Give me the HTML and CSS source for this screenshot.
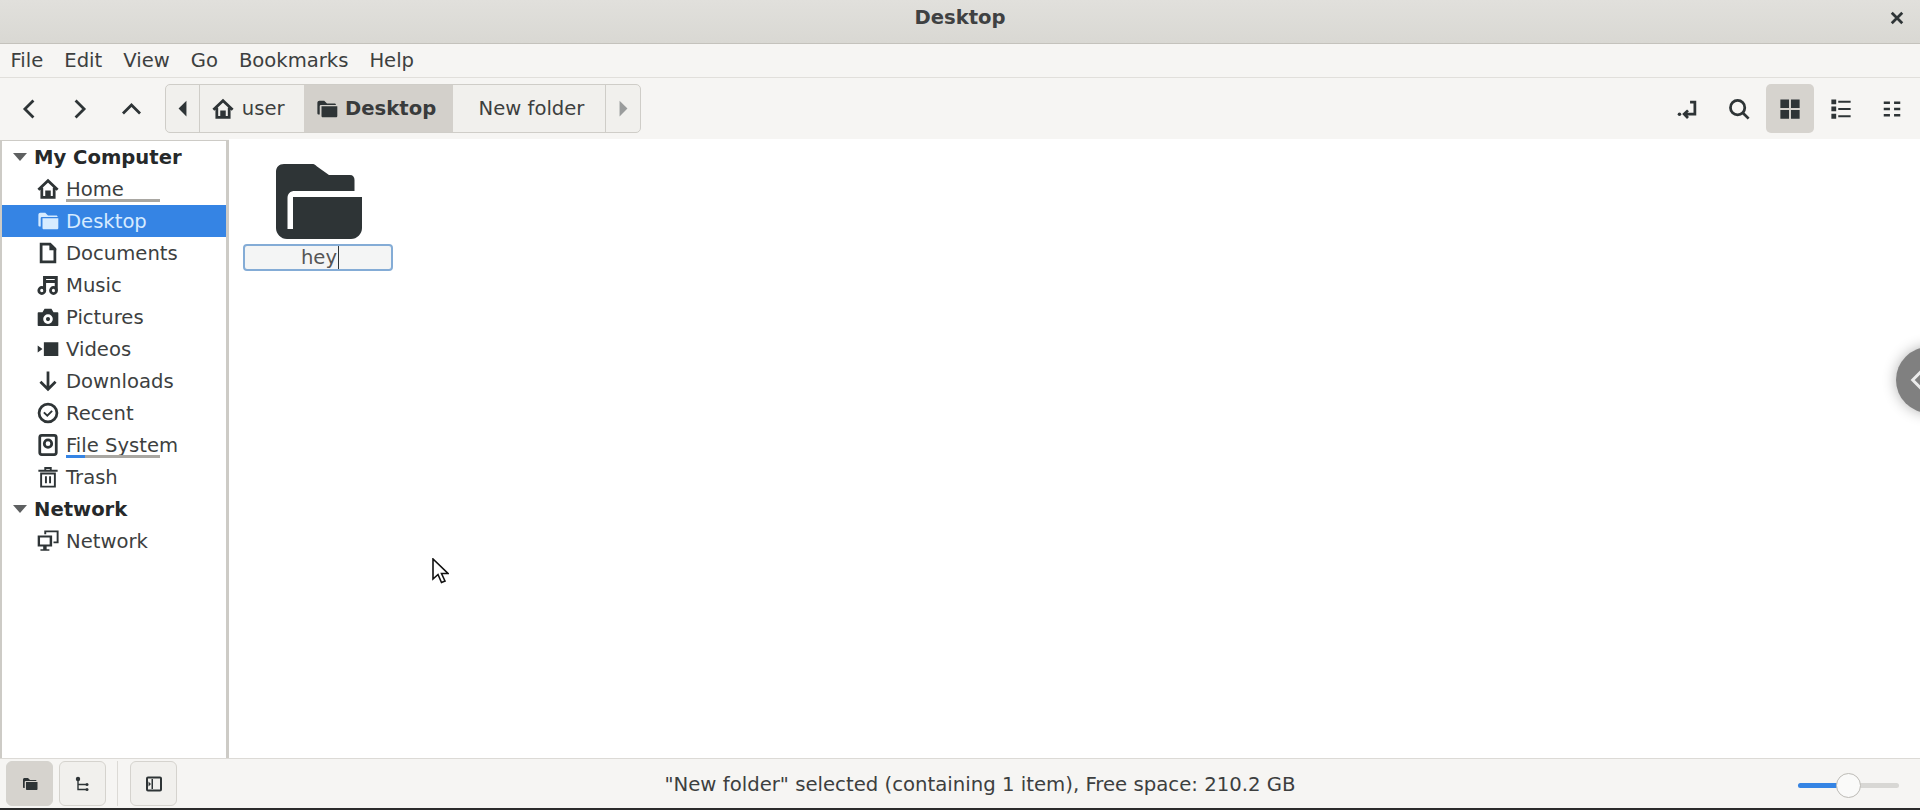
FILE: index.html
```html
<!DOCTYPE html>
<html>

<head>
    <title>Desktop</title>
    <link rel="stylesheet" href="styles.css">
</head>

<body>
    <div class="window">
        <div class="titlebar">
            <span class="title">Desktop</span>
            <svg class="close" viewBox="0 0 12 12"><path d="M1.5 1.5l9 9M10.5 1.5l-9 9"/></svg>
        </div>

        <div class="menubar">
            <span class="menu-item">File</span>
            <span class="menu-item">Edit</span>
            <span class="menu-item">View</span>
            <span class="menu-item">Go</span>
            <span class="menu-item">Bookmarks</span>
            <span class="menu-item">Help</span>
        </div>

        <div class="toolbar">
            <div class="nav">
                <svg class="nav-icon" viewBox="0 0 16 16"><path d="M11 1.500L4.500 8l6.500 6.500"/></svg>
                <svg class="nav-icon" viewBox="0 0 16 16"><path d="M5 1.500L11.500 8 5 14.500"/></svg>
                <svg class="nav-icon nav-up" viewBox="0 0 16 16"><path d="M1.500 11.500L8 5l6.500 6.500"/></svg>
            </div>
            <div class="pathbar">
                <div class="path-arrow">
                    <svg viewBox="0 0 8 14"><path class="dark" d="M7.500 0v14L.5 7z"/></svg>
                </div>
                <div class="path-seg seg-user">
                    <svg class="seg-icon" viewBox="0 0 16 16"><path class="line" d="M1 8.500L8 2l7 6.500M3.500 7v7H7v-4h2v4h3.500V7"/></svg>
                    user
                </div>
                <div class="path-seg seg-active">
                    <svg class="seg-icon" viewBox="0 0 16 16"><path class="dark" d="M1 3.500C1 2.700 1.700 2 2.500 2h3.500l2 2h5.500c.6 0 1 .4 1 1H3.500C3 5 2.700 5.400 2.700 6v6H2c-.6 0-1-.4-1-1zM4 6h11.500v7c0 .6-.4 1-1 1H5c-.6 0-1-.4-1-1z"/></svg>
                    Desktop
                </div>
                <div class="path-seg seg-new">New folder</div>
                <div class="path-arrow arrow-end">
                    <svg viewBox="0 0 8 14"><path class="muted" d="M.5 0v14l7-7z"/></svg>
                </div>
            </div>
            <div class="tools">
                <div class="tool">
                    <svg viewBox="0 0 16 16"><circle class="dark" cx="1.800" cy="11.800" r="1.300"/><path class="line" d="M9.500 3h3.500v8.700H5.500M8 9l-2.800 2.700L8 14.500"/></svg>
                </div>
                <div class="tool">
                    <svg viewBox="0 0 16 16"><circle class="line" cx="7" cy="7" r="5.200"/><path class="line" d="M10.700 10.700L15 15"/></svg>
                </div>
                <div class="tool tool-active">
                    <svg viewBox="0 0 16 16"><path class="dark" d="M1 1h6.300v6.300H1zM8.700 1H15v6.300H8.700zM1 8.700h6.300V15H1zM8.700 8.700H15V15H8.700z"/></svg>
                </div>
                <div class="tool">
                    <svg viewBox="0 0 16 16"><path class="dark" d="M1 1h3.500v3.500H1zM1 6.200h3.500v3.500H1zM1 11.500h3.500V15H1zM6 2h9v1.500H6zM6 7.200h9v1.500H6zM6 12.500h9V14H6z"/></svg>
                </div>
                <div class="tool">
                    <svg viewBox="0 0 16 16"><path class="dark" d="M2 2.500h4.500v1.800H2zM9.500 2.500H14v1.800H9.500zM2 7.100h4.500v1.800H2zM9.500 7.100H14v1.800H9.500zM2 11.700h4.500v1.800H2zM9.500 11.700H14v1.800H9.500z"/></svg>
                </div>
            </div>
        </div>

        <div class="main">
            <div class="sidebar">
                <div class="side-head"><span class="caret"></span>My Computer</div>
                <div class="side-row">
                    <svg viewBox="0 0 16 16"><path class="line" d="M1 8.500L8 2l7 6.500M3.500 7v7H7v-4h2v4h3.500V7"/></svg>
                    <span>Home</span>
                    <div class="usage"></div>
                </div>
                <div class="side-row side-selected">
                    <svg viewBox="0 0 16 16"><path class="light" d="M1 3.500C1 2.700 1.700 2 2.500 2h3.500l2 2h6c.6 0 1 .4 1 1H3.500C3 5 2.700 5.400 2.700 6v6H2c-.6 0-1-.4-1-1zM4 6h11.500v7c0 .6-.4 1-1 1H5c-.6 0-1-.4-1-1z"/></svg>
                    <span>Desktop</span>
                </div>
                <div class="side-row">
                    <svg viewBox="0 0 16 16"><path class="line" d="M3 1.500h6.500L13 5v9.500H3z"/><path class="dark" d="M9 1h1l4 4v1H9z"/></svg>
                    <span>Documents</span>
                </div>
                <div class="side-row">
                    <svg viewBox="0 0 16 16"><circle class="line" cx="3.500" cy="12" r="2.200"/><circle class="line" cx="12" cy="12" r="2.200"/><path class="line thick" d="M5.500 12V2.500h8.500V12M5.500 5.500H14"/></svg>
                    <span>Music</span>
                </div>
                <div class="side-row">
                    <svg viewBox="0 0 16 16"><path class="dark" fill-rule="evenodd" d="M1 4.500h3L5.500 2h5L12 4.500h3c.3 0 .5.200.5.500v9c0 .3-.2.500-.5.500H1c-.3 0-.5-.2-.5-.5V5c0-.3.2-.5.500-.5zM8 6a3.500 3.500 0 1 0 0 7 3.500 3.500 0 0 0 0-7zm0 2a1.500 1.500 0 1 1 0 3 1.500 1.500 0 0 1 0-3z"/></svg>
                    <span>Pictures</span>
                </div>
                <div class="side-row">
                    <svg viewBox="0 0 16 16"><path class="dark" d="M5 3h10.500v10H5zM0.500 5.500L4 8l-3.500 2.500z"/></svg>
                    <span>Videos</span>
                </div>
                <div class="side-row">
                    <svg viewBox="0 0 16 16"><path class="line" d="M8 1v13M2.500 8.500L8 14l5.500-5.500"/></svg>
                    <span>Downloads</span>
                </div>
                <div class="side-row">
                    <svg viewBox="0 0 16 16"><circle class="line" cx="8" cy="8" r="6.500"/><path class="line thin" d="M5 7.500L7.500 10 11 6.500"/></svg>
                    <span>Recent</span>
                </div>
                <div class="side-row">
                    <svg viewBox="0 0 16 16"><rect class="line" x="2" y="1" width="12" height="14" rx="1.500"/><circle class="line" cx="8" cy="7" r="2.700"/></svg>
                    <span>File System</span>
                    <div class="usage"><div class="usage-fill"></div></div>
                </div>
                <div class="side-row">
                    <svg viewBox="0 0 16 16"><path class="line thin" d="M1 3.500h14M6 3V1.500h4V3M3 5.500h10V15H3zM6.500 7.500v5M9.500 7.500v5"/></svg>
                    <span>Trash</span>
                </div>
                <div class="side-head"><span class="caret"></span>Network</div>
                <div class="side-row">
                    <svg viewBox="0 0 16 16"><path class="line thin" d="M6 3V1h9v8h-3"/><path class="dark" d="M0.500 4h10.500v8H7v2h2v1H2.500v-1h2v-2h-4zM2.200 5.500v5h7v-5z" fill-rule="evenodd"/></svg>
                    <span>Network</span>
                </div>
            </div>

            <div class="files">
                <div class="file-item">
                    <svg class="folder" viewBox="0 0 86 75"><path d="M8 0h28c2 0 3 .5 5 2.500L53 11h21c3 0 4.500 2 4.500 5v11H19c-5 0-7.500 2.500-7.500 7.500V65H17V33h69v31c0 6-5 11-11 11H11C5 75 0 70 0 64V8c0-5 3-8 8-8z"/></svg>
                    <div class="rename">
                        <span class="rename-text">hey</span>
                    </div>
                </div>
            </div>
        </div>

        <div class="statusbar">
            <div class="status-buttons">
                <div class="status-btn status-btn-active">
                    <svg viewBox="0 0 16 16"><path class="dark" d="M1 3.500C1 2.700 1.700 2 2.500 2h3.500l2 2h5.500c.6 0 1 .4 1 1H3.500C3 5 2.700 5.400 2.700 6v6H2c-.6 0-1-.4-1-1zM4 6h11.500v7c0 .6-.4 1-1 1H5c-.6 0-1-.4-1-1z"/></svg>
                </div>
                <div class="status-btn">
                    <svg viewBox="0 0 16 16"><circle class="dark" cx="3" cy="3" r="2.200"/><path class="line thin" d="M3 4v9.500h8M3 8.500h8"/><circle class="dark" cx="12" cy="8.500" r="1.500"/><circle class="dark" cx="12" cy="13.500" r="1.500"/></svg>
                </div>
                <div class="status-sep"></div>
                <div class="status-btn">
                    <svg viewBox="0 0 16 16"><rect class="line" x="1" y="1.500" width="14" height="13" rx="1"/><path class="dark" d="M5.500 3h1.500v10H5.500zM5 8l-2.500-2.500v5z"/></svg>
                </div>
            </div>
            <div class="status-text">"New folder" selected (containing 1 item), Free space: 210.2 GB</div>
            <div class="zoom-slider">
                <div class="slider-fill"></div>
                <div class="slider-knob"></div>
            </div>
        </div>

        <!-- floating handle at the screen edge -->
        <div class="edge-handle">
            <svg viewBox="0 0 24 36"><path d="M18 6L6 18l12 12"/></svg>
        </div>

        <svg class="pointer" viewBox="0 0 17 27"><path d="M1 1v20l5-4.500 3.500 8 3.500-1.500-3.500-7.500H16z"/></svg>
    </div>
</body>

</html>
```

FILE: styles.css
```css
html, body {
    height: 100%;
    margin: 0;
    overflow: hidden;
}

body {
    font-family: "DejaVu Sans", sans-serif;
    font-size: 19.600px;
    color: #3d3f3f;
}

svg {
    display: block;
    flex: none;
}

.dark {
    fill: #2e3436;
}

.muted {
    fill: #9a9c9c;
}

.light {
    fill: #d6ebff;
}

.line {
    fill: none;
    stroke: #2e3436;
    stroke-width: 2;
}

.thin {
    stroke-width: 1.400;
}

.thick {
    stroke-width: 2.200;
}

.window {
    position: relative;
    display: flex;
    flex-direction: column;
    height: 810px;
    background: #f6f5f3;
    overflow: hidden;
}

/* Title bar */
.titlebar {
    position: relative;
    display: flex;
    align-items: center;
    justify-content: center;
    flex: none;
    height: 44px;
    padding-bottom: 8px;
    box-sizing: border-box;
    background: linear-gradient(#e1e0dc, #d9d8d3);
    border-bottom: 1px solid #c4c2bc;
}

.title {
    font-weight: bold;
    color: #3f4142;
}

.close {
    position: absolute;
    right: 16px;
    top: 11px;
    width: 14px;
    height: 14px;
    fill: none;
    stroke: #2e3436;
    stroke-width: 2.400;
}

/* Menu bar */
.menubar {
    display: flex;
    align-items: center;
    flex: none;
    height: 34px;
    border-bottom: 1px solid #e1dfdb;
    background: #f6f5f3;
    box-sizing: border-box;
}

.menu-item {
    padding: 0 10.500px;
}

/* Toolbar */
.toolbar {
    display: flex;
    align-items: center;
    flex: none;
    height: 61px;
    box-sizing: border-box;
}

.nav {
    display: flex;
    align-items: center;
    width: 165px;
    padding-left: 19px;
    box-sizing: border-box;
    gap: 29px;
}

.nav-icon {
    width: 21px;
    height: 22px;
    fill: none;
    stroke: #2e3436;
    stroke-width: 2.100;
}

.nav-up {
    margin-left: 2px;
}

.pathbar {
    display: flex;
    width: 476px;
    height: 49px;
    box-sizing: border-box;
    border: 1px solid #cfcdc8;
    border-radius: 5px;
    background: #f1f0ed;
    overflow: hidden;
}

.path-arrow {
    display: flex;
    align-items: center;
    justify-content: center;
    width: 33px;
    border-right: 1px solid #cfcdc8;
}

.path-arrow svg {
    width: 9px;
    height: 17px;
}

.arrow-end {
    width: 34px;
    border-right: 0;
    border-left: 1px solid #cfcdc8;
}

.path-seg {
    display: flex;
    align-items: center;
    justify-content: center;
    gap: 7px;
    box-sizing: border-box;
}

.seg-user {
    width: 105px;
    gap: 8px;
    padding-right: 8px;
}

.seg-active {
    width: 149px;
    padding-right: 5px;
    background: #d3d0cb;
    font-weight: bold;
    color: #393b3c;
}

.seg-new {
    width: 153px;
    padding-left: 5px;
}

.seg-icon {
    width: 22px;
    height: 22px;
}

.tools {
    display: flex;
    align-items: center;
    margin-left: auto;
    margin-right: 4px;
    gap: 3px;
}

.tool {
    display: flex;
    align-items: center;
    justify-content: center;
    width: 48px;
    height: 49px;
    border-radius: 5px;
}

.tool svg {
    width: 22px;
    height: 22px;
}

.tool-active {
    background: #d6d3ce;
}

/* Sidebar and file area */
.main {
    display: flex;
    flex: 1;
    min-height: 0;
}

.sidebar {
    flex: none;
    width: 229px;
    margin-top: 1px;
    box-sizing: border-box;
    background: #fff;
    border: 1px solid #cdcbc6;
    border-left-width: 2px;
    border-right-width: 3px;
    border-bottom: 0;
}

.side-head {
    display: flex;
    align-items: center;
    height: 32px;
    font-weight: bold;
    color: #26292a;
}

.caret {
    width: 0;
    height: 0;
    margin: 0 7px 0 11px;
    border-left: 7px solid transparent;
    border-right: 7px solid transparent;
    border-top: 8px solid #5e6061;
}

.side-row {
    position: relative;
    display: flex;
    align-items: center;
    gap: 7px;
    height: 32px;
    padding-left: 35px;
}

.side-row svg {
    width: 22px;
    height: 22px;
}

.side-selected {
    background: #3584e4;
    color: #d6ebff;
}

.usage {
    position: absolute;
    left: 64px;
    bottom: 3px;
    width: 94px;
    height: 3px;
    background: #a9a7a2;
}

.usage-fill {
    width: 19px;
    height: 3px;
    background: #3584e4;
}

.files {
    flex: 1;
    background: #fff;
    padding: 25px 0 0 14px;
}

.file-item {
    display: flex;
    flex-direction: column;
    align-items: center;
    width: 150px;
}

.folder {
    width: 86px;
    height: 75px;
    margin-left: 1px;
    fill: #2e3436;
}

.rename {
    width: 150px;
    height: 27px;
    margin-top: 5px;
    padding-left: 4px;
    box-sizing: border-box;
    border: 2px solid #84acd6;
    border-radius: 4px;
    background: #f4f5f5;
    text-align: center;
    line-height: 24px;
    color: #555;
}

.rename-text {
    padding-right: 1px;
    border-right: 1px solid #2e3436;
}

/* Status bar */
.statusbar {
    position: relative;
    display: flex;
    align-items: center;
    flex: none;
    height: 52px;
    box-sizing: border-box;
    border-top: 1px solid #dcdad6;
    border-bottom: 2px solid #2b2b2b;
    background: #f6f5f3;
}

.status-buttons {
    display: flex;
    align-items: center;
    gap: 6px;
    padding-left: 6px;
}

.status-btn {
    display: flex;
    align-items: center;
    justify-content: center;
    width: 47px;
    height: 45px;
    box-sizing: border-box;
    border: 1px solid #d5d3ce;
    border-radius: 6px;
    background: #f1f0ed;
}

.status-btn svg {
    width: 16px;
    height: 16px;
}

.status-btn-active {
    background: #d6d3ce;
}

.status-sep {
    width: 1px;
    height: 45px;
    margin: 0 6px 0 5px;
    background: #dcdad6;
}

.status-text {
    position: absolute;
    left: 0;
    right: 0;
    margin-left: 40px;
    padding-top: 2px;
    text-align: center;
    font-size: 19.700px;
}

.zoom-slider {
    position: absolute;
    left: 1798px;
    top: 24px;
    width: 101px;
    height: 5px;
    border-radius: 3px;
    background: #d8d7d4;
}

.slider-fill {
    width: 51px;
    height: 5px;
    border-radius: 3px;
    background: #3584e4;
}

.slider-knob {
    position: absolute;
    left: 38px;
    top: -10px;
    width: 25px;
    height: 25px;
    box-sizing: border-box;
    border: 1px solid #bdbbb6;
    border-radius: 50%;
    background: #fafaf9;
}

/* Overlays */
.edge-handle {
    position: absolute;
    left: 1896px;
    top: 347px;
    display: flex;
    align-items: center;
    width: 66px;
    height: 66px;
    padding-left: 12px;
    box-sizing: border-box;
    border-radius: 50%;
    background: #808080;
    box-shadow: 0 0 14px rgba(0, 0, 0, 0.3);
}

.edge-handle svg {
    width: 18px;
    height: 26px;
    fill: none;
    stroke: #ececec;
    stroke-width: 4;
}

.pointer {
    position: absolute;
    left: 432px;
    top: 558px;
    width: 17px;
    height: 27px;
    fill: #fff;
    stroke: #111;
    stroke-width: 1.600;
}
```
